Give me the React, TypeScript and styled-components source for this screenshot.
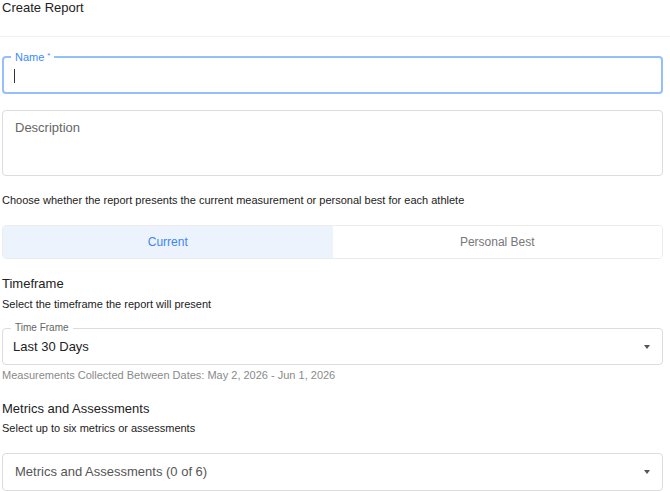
import React from "react";
import styled, { createGlobalStyle } from "styled-components";

const Global = createGlobalStyle`
  html, body { margin: 0; padding: 0; background: #fff; }
  body { font-family: "Liberation Sans", Arial, sans-serif; color: #222; }
  * { box-sizing: border-box; }
`;

const Page = styled.div`
  width: 670px;
  display: flex;
  flex-direction: column;
`;

const Header = styled.div`
  height: 37px;
  padding: 0 2px;
  border-bottom: 1px solid #f1f1f1;
  font-size: 13px;
  line-height: 16px;
  color: #222;
`;

const Body = styled.div`
  padding: 0 7px 0 2px;
  display: flex;
  flex-direction: column;
`;

const Field = styled.div<{ $focused?: boolean; $h: number; $mt: number; $pl?: number }>`
  position: relative;
  margin-top: ${(p) => p.$mt}px;
  height: ${(p) => p.$h}px;
  border: ${(p) => (p.$focused ? "2px solid #93c0fb" : "1px solid #dcdcdc")};
  border-radius: 4px;
  display: flex;
  align-items: ${(p) => (p.$focused ? "center" : "flex-start")};
  padding-left: ${(p) => (p.$pl !== undefined ? p.$pl : p.$focused ? 10 : 12)}px;
`;

const FloatLabel = styled.span<{ $focused?: boolean }>`
  position: absolute;
  left: ${(p) => (p.$focused ? 7 : 8)}px;
  top: ${(p) => (p.$focused ? -9 : -8)}px;
  padding: 0 4px;
  background: #fff;
  font-size: ${(p) => (p.$focused ? 11 : 10)}px;
  line-height: 13px;
  color: ${(p) => (p.$focused ? "#3a8afb" : "#666")};
`;

const Star = styled.span`
  font-size: 8px;
  vertical-align: 3px;
  margin-left: 3px;
`;

const Caret = styled.span`
  width: 1px;
  height: 14px;
  background: #333;
  margin-top: 1px;
`;

const Placeholder = styled.span<{ $pt: number; $color?: string }>`
  padding-top: ${(p) => p.$pt}px;
  font-size: 13px;
  line-height: 16px;
  color: ${(p) => p.$color || "#666"};
`;

const Text = styled.div<{ $mt: number; $heading?: boolean; $color?: string }>`
  margin-top: ${(p) => p.$mt}px;
  font-size: ${(p) => (p.$heading ? 13 : 11)}px;
  line-height: ${(p) => (p.$heading ? 16 : 14)}px;
  color: ${(p) => p.$color || "#222"};
`;

const Toggle = styled.div`
  margin-top: 18px;
  height: 34px;
  display: grid;
  grid-template-columns: 1fr 1fr;
  border: 1px solid #ececec;
  border-radius: 4px;
  overflow: hidden;
`;

const ToggleOption = styled.div<{ $active?: boolean }>`
  display: flex;
  align-items: center;
  justify-content: center;
  font-size: 12px;
  background: ${(p) => (p.$active ? "#edf3fd" : "#fff")};
  color: ${(p) => (p.$active ? "#3b86f7" : "#777")};
`;

const Arrow = styled.span`
  position: absolute;
  right: 12px;
  top: 50%;
  margin-top: -2px;
  width: 0;
  height: 0;
  border-left: 3.5px solid transparent;
  border-right: 3.5px solid transparent;
  border-top: 4px solid #555;
`;

export default function App() {
  return (
    <>
      <Global />
      <Page>
        <Header>Create Report</Header>
        <Body>
          <Field $focused $h={38} $mt={19}>
            <FloatLabel $focused>
              Name<Star>*</Star>
            </FloatLabel>
            <Caret />
          </Field>
          <Field $h={66} $mt={16}>
            <Placeholder $pt={9}>Description</Placeholder>
          </Field>
          <Text $mt={17}>
            Choose whether the report presents the current measurement or personal best for each athlete
          </Text>
          <Toggle>
            <ToggleOption $active>Current</ToggleOption>
            <ToggleOption>Personal Best</ToggleOption>
          </Toggle>
          <Text $mt={17} $heading>Timeframe</Text>
          <Text $mt={5}>Select the timeframe the report will present</Text>
          <Field $h={37} $mt={17} $pl={10}>
            <FloatLabel>Time Frame</FloatLabel>
            <Placeholder $pt={10} $color="#222">Last 30 Days</Placeholder>
            <Arrow />
          </Field>
          <Text $mt={3} $color="#8a8a8a">
            Measurements Collected Between Dates: May 2, 2026 - Jun 1, 2026
          </Text>
          <Text $mt={19} $heading>Metrics and Assessments</Text>
          <Text $mt={4}>Select up to six metrics or assessments</Text>
          <Field $h={38} $mt={18}>
            <Placeholder $pt={10} $color="#555">Metrics and Assessments (0 of 6)</Placeholder>
            <Arrow />
          </Field>
        </Body>
      </Page>
    </>
  );
}
